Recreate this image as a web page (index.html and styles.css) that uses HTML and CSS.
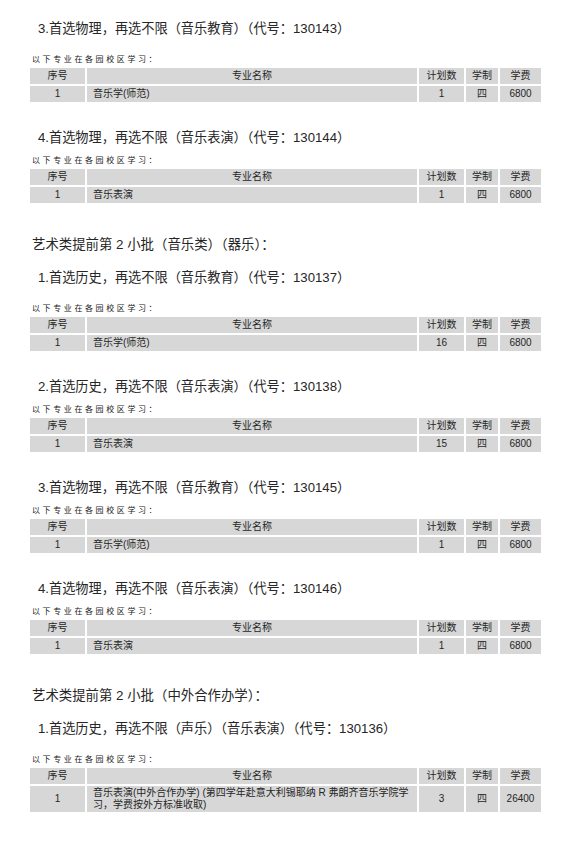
FILE: index.html
```html
<!DOCTYPE html>
<html lang="zh">
<head>
<meta charset="utf-8">
<link rel="stylesheet" href="styles.css">
</head>
<body>
<div class="page">
  <p class="h top">3.首选物理，再选不限（音乐教育）（代号：130143）</p>
  <p class="note first">以下专业在各园校区学习：</p>
  <table class="plan">
    <colgroup><col class="c1"><col class="c2"><col class="c3"><col class="c4"><col class="c5"></colgroup>
    <tr><th>序号</th><th>专业名称</th><th>计划数</th><th>学制</th><th>学费</th></tr>
    <tr><td>1</td><td class="name">音乐学(师范)</td><td>1</td><td>四</td><td>6800</td></tr>
  </table>

  <p class="h">4.首选物理，再选不限（音乐表演）（代号：130144）</p>
  <p class="note">以下专业在各园校区学习：</p>
  <table class="plan">
    <colgroup><col class="c1"><col class="c2"><col class="c3"><col class="c4"><col class="c5"></colgroup>
    <tr><th>序号</th><th>专业名称</th><th>计划数</th><th>学制</th><th>学费</th></tr>
    <tr><td>1</td><td class="name">音乐表演</td><td>1</td><td>四</td><td>6800</td></tr>
  </table>

  <p class="sec">艺术类提前第 2 小批（音乐类）（器乐）：</p>

  <p class="h after-sec">1.首选历史，再选不限（音乐教育）（代号：130137）</p>
  <p class="note first">以下专业在各园校区学习：</p>
  <table class="plan">
    <colgroup><col class="c1"><col class="c2"><col class="c3"><col class="c4"><col class="c5"></colgroup>
    <tr><th>序号</th><th>专业名称</th><th>计划数</th><th>学制</th><th>学费</th></tr>
    <tr><td>1</td><td class="name">音乐学(师范)</td><td>16</td><td>四</td><td>6800</td></tr>
  </table>

  <p class="h">2.首选历史，再选不限（音乐表演）（代号：130138）</p>
  <p class="note">以下专业在各园校区学习：</p>
  <table class="plan">
    <colgroup><col class="c1"><col class="c2"><col class="c3"><col class="c4"><col class="c5"></colgroup>
    <tr><th>序号</th><th>专业名称</th><th>计划数</th><th>学制</th><th>学费</th></tr>
    <tr><td>1</td><td class="name">音乐表演</td><td>15</td><td>四</td><td>6800</td></tr>
  </table>

  <p class="h">3.首选物理，再选不限（音乐教育）（代号：130145）</p>
  <p class="note">以下专业在各园校区学习：</p>
  <table class="plan">
    <colgroup><col class="c1"><col class="c2"><col class="c3"><col class="c4"><col class="c5"></colgroup>
    <tr><th>序号</th><th>专业名称</th><th>计划数</th><th>学制</th><th>学费</th></tr>
    <tr><td>1</td><td class="name">音乐学(师范)</td><td>1</td><td>四</td><td>6800</td></tr>
  </table>

  <p class="h">4.首选物理，再选不限（音乐表演）（代号：130146）</p>
  <p class="note">以下专业在各园校区学习：</p>
  <table class="plan">
    <colgroup><col class="c1"><col class="c2"><col class="c3"><col class="c4"><col class="c5"></colgroup>
    <tr><th>序号</th><th>专业名称</th><th>计划数</th><th>学制</th><th>学费</th></tr>
    <tr><td>1</td><td class="name">音乐表演</td><td>1</td><td>四</td><td>6800</td></tr>
  </table>

  <p class="sec">艺术类提前第 2 小批（中外合作办学）：</p>

  <p class="h after-sec">1.首选历史，再选不限（声乐）（音乐表演）（代号：130136）</p>
  <p class="note first">以下专业在各园校区学习：</p>
  <table class="plan">
    <colgroup><col class="c1"><col class="c2"><col class="c3"><col class="c4"><col class="c5"></colgroup>
    <tr><th>序号</th><th>专业名称</th><th>计划数</th><th>学制</th><th>学费</th></tr>
    <tr><td>1</td><td class="name">音乐表演(中外合作办学) (第四学年赴意大利锡耶纳 R 弗朗齐音乐学院学习，学费按外方标准收取)</td><td>3</td><td>四</td><td>26400</td></tr>
  </table>
</div>
</body>
</html>
```
FILE: styles.css
```css
html, body {
  margin: 0;
  padding: 0;
  background: #ffffff;
}

body {
  color: #262626;
  font-family: "Liberation Sans", "Noto Sans CJK SC", sans-serif;
}

.page {
  padding: 19px 0 40px 28px;
}

.h {
  margin: 24px 0 0;
  padding-left: 10px;
  font-size: 13.2px;
  line-height: 20px;
}

.h.top {
  margin-top: 0;
}

.h.after-sec {
  margin-top: 13px;
}

.sec {
  margin: 30px 0 0;
  padding-left: 4px;
  font-size: 13.4px;
  line-height: 20px;
}

.note {
  margin: 6px 0 0 4px;
  font-family: "Noto Sans CJK SC", sans-serif;
  font-size: 8px;
  line-height: 12px;
  letter-spacing: 2.6px;
  color: #1a1a1a;
}

.note.first {
  margin-top: 14px;
}

.plan {
  margin-top: 1px;
  border-collapse: separate;
  border-spacing: 2px;
  table-layout: fixed;
  width: 515px;
}

.c1 { width: 55px; }
.c2 { width: 330px; }
.c3 { width: 45px; }
.c4 { width: 32px; }
.c5 { width: 41px; }

.plan th,
.plan td {
  background: #d7d7d7;
  height: 14px;
  padding: 1px 2px;
  font-size: 10px;
  line-height: 12px;
  font-weight: normal;
  text-align: center;
  vertical-align: middle;
  color: #262626;
}

.plan td.name {
  text-align: left;
  padding-left: 6px;
  padding-right: 4px;
}
```
